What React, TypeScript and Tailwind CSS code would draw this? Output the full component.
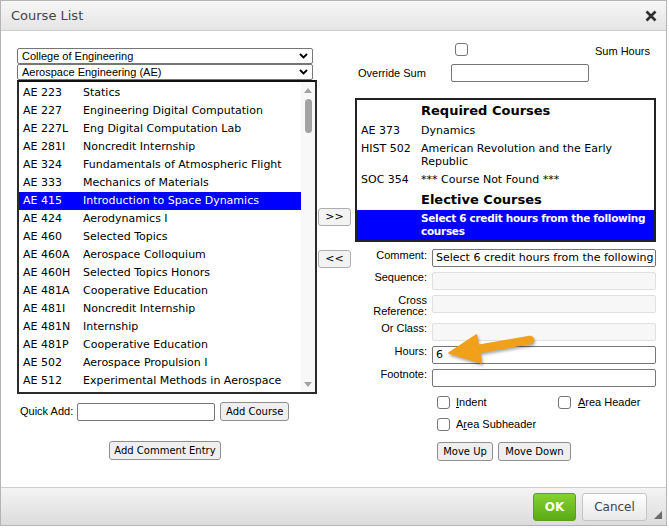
// Course List dialog (program builder)

const verdana = "font-['DejaVu_Sans',Verdana,sans-serif]";
const arial = "font-['Liberation_Sans',Arial,sans-serif]";

const leftCourses: [string, string][] = [
  ["AE 223", "Statics"],
  ["AE 227", "Engineering Digital Computation"],
  ["AE 227L", "Eng Digital Computation Lab"],
  ["AE 281I", "Noncredit Internship"],
  ["AE 324", "Fundamentals of Atmospheric Flight"],
  ["AE 333", "Mechanics of Materials"],
  ["AE 415", "Introduction to Space Dynamics"],
  ["AE 424", "Aerodynamics I"],
  ["AE 460", "Selected Topics"],
  ["AE 460A", "Aerospace Colloquium"],
  ["AE 460H", "Selected Topics Honors"],
  ["AE 481A", "Cooperative Education"],
  ["AE 481I", "Noncredit Internship"],
  ["AE 481N", "Internship"],
  ["AE 481P", "Cooperative Education"],
  ["AE 502", "Aerospace Propulsion I"],
  ["AE 512", "Experimental Methods in Aerospace"],
];

const Chevron = () => (
  <svg width="9" height="6" viewBox="0 0 9 6" className="mr-[2px]">
    <path d="M1 1 L4.5 4.5 L8 1" fill="none" stroke="#000" strokeWidth="1.8" />
  </svg>
);

const FakeSelect = ({ label }: { label: string }) => (
  <div
    className={`flex items-center justify-between h-[16px] w-[296px] border border-[#767676] rounded-[2px] bg-white pl-[4px] pr-[2px] text-[11px] leading-[14px] text-black ${arial}`}
  >
    <span>{label}</span>
    <Chevron />
  </div>
);

const Check = () => (
  <span className="block w-[13px] h-[13px] border border-[#767676] rounded-[3px] bg-white shrink-0" />
);

const Btn = ({ label, className }: { label: string; className: string }) => (
  <button
    className={`flex items-center justify-center border border-[#8f8f8f] rounded-[3px] bg-[#efefef] text-[10px] text-black ${verdana} ${className}`}
  >
    {label}
  </button>
);

const Field = ({ value, disabled }: { value?: string; disabled?: boolean }) => (
  <div
    className={`h-[18px] w-[224px] overflow-hidden whitespace-nowrap rounded-[2px] border pl-[3px] text-[11px] leading-[16px] text-black ${verdana} ${
      disabled ? "border-[#e0e0e0] bg-[#f7f7f7]" : "border-[#767676] bg-white"
    }`}
  >
    {value}
  </div>
);

const App = () => {
  return (
    <div className="relative w-[669px] h-[528px] bg-white">
      <div className="flex flex-col w-[667px] h-[526px] border border-[#b4b4b4] bg-white">
        {/* Title bar */}
        <div className="flex items-center justify-between h-[30px] shrink-0 border-b border-[#cdcdcd] bg-gradient-to-b from-[#f7f7f7] to-[#e4e4e4] pl-[10px] pr-[9px]">
          <span className={`text-[13px] text-[#444] ${verdana}`}>Course List</span>
          <svg width="12" height="12" viewBox="0 0 12 12">
            <path d="M1.5 1.5 L10.5 10.5 M10.5 1.5 L1.5 10.5" stroke="#2e2e2e" strokeWidth="2.6" />
          </svg>
        </div>

        {/* Body */}
        <div className="flex flex-1 items-start pl-[16px]">
          {/* Left column */}
          <div className="w-[300px] pt-[17px]">
            <FakeSelect label="College of Engineering" />
            <FakeSelect label="Aerospace Engineering (AE)" />
            <div className="flex w-[300px] h-[314px] border-2 border-[#2b2b2b] border-t-[#111] bg-white">
              <div className={`w-[282px] pt-[2px] text-[11px] text-black ${verdana}`}>
                {leftCourses.map(([code, name]) => (
                  <div
                    key={code}
                    className={`flex items-center h-[18px] whitespace-nowrap ${
                      code === "AE 415" ? "bg-[#0000ff] text-white" : ""
                    }`}
                  >
                    <span className="w-[64px] pl-[4px]">{code}</span>
                    <span>{name}</span>
                  </div>
                ))}
              </div>
              <div className="flex flex-col items-center w-[14px] bg-[#f8f8f8]">
                <svg width="8" height="5" viewBox="0 0 8 5" className="mt-[6px]">
                  <path d="M0 5 L4 0 L8 5 Z" fill="#a3a3a3" />
                </svg>
                <span className="block w-[7px] h-[34px] mt-[6px] rounded-full bg-[#a3a3a3]" />
                <span className="flex-1" />
                <svg width="8" height="5" viewBox="0 0 8 5" className="mb-[5px]">
                  <path d="M0 0 L8 0 L4 5 Z" fill="#a3a3a3" />
                </svg>
              </div>
            </div>

            {/* Quick add */}
            <div className="flex items-center mt-[8px]">
              <span className={`ml-[3px] text-[11px] text-black ${arial}`}>Quick Add:</span>
              <span className="block ml-[4px] w-[138px] h-[18px] border border-[#767676] rounded-[2px] bg-white" />
              <Btn label="Add Course" className="ml-[5px] w-[69px] h-[19px]" />
            </div>
            <Btn label="Add Comment Entry" className="mt-[20px] ml-[92px] w-[112px] h-[19px]" />
          </div>

          {/* Move buttons */}
          <div className="flex flex-col w-[38px] pt-[177px] pl-px">
            <button className={`w-[33px] h-[18px] border border-[#adadad] rounded-[3px] bg-[#f3f3f3] text-[11px] text-black ${verdana}`}>
              &gt;&gt;
            </button>
            <button className={`mt-[24px] w-[33px] h-[18px] border border-[#adadad] rounded-[3px] bg-[#f3f3f3] text-[11px] text-black ${verdana}`}>
              &lt;&lt;
            </button>
          </div>

          {/* Right column */}
          <div className={`w-[301px] pt-[12px] text-[11px] leading-[13px] text-black ${arial}`}>
            <div className="flex items-center h-[13px]">
              <span className="ml-[100px]">
                <Check />
              </span>
              <span className="ml-auto mr-[6px] translate-y-[2px]">Sum Hours</span>
            </div>
            <div className="flex items-center mt-[8px]">
              <span className="w-[96px] pl-[3px]">Override Sum</span>
              <span className="block w-[138px] h-[18px] border border-[#767676] rounded-[2px] bg-white" />
            </div>

            {/* Selected requirements */}
            <div className={`mt-[16px] w-[301px] border-2 border-[#222] bg-white text-[11px] ${verdana}`}>
              <div className="flex items-center h-[21px]">
                <span className="w-[64px]" />
                <span className="text-[13px] font-bold">Required Courses</span>
              </div>
              <div className="flex py-[2.5px] leading-[13px]">
                <span className="w-[64px] shrink-0 pl-[4px]">AE 373</span>
                <span className="flex-1">Dynamics</span>
              </div>
              <div className="flex py-[2.5px] leading-[13px]">
                <span className="w-[64px] shrink-0 pl-[4px]">HIST 502</span>
                <span className="flex-1">American Revolution and the Early Republic</span>
              </div>
              <div className="flex py-[2.5px] leading-[13px]">
                <span className="w-[64px] shrink-0 pl-[4px]">SOC 354</span>
                <span className="flex-1">*** Course Not Found ***</span>
              </div>
              <div className="flex items-center h-[22px]">
                <span className="w-[64px]" />
                <span className="text-[13px] font-bold">Elective Courses</span>
              </div>
              <div className="flex py-[2px] leading-[13px] bg-[#0000ff] text-white font-bold text-[10.5px] tracking-[-0.3px]">
                <span className="w-[64px] shrink-0" />
                <span className="flex-1">Select 6 credit hours from the following courses</span>
              </div>
            </div>

            {/* Entry details */}
            <div className="grid grid-cols-[72px_224px] gap-x-[5px] gap-y-[5px] mt-[7px] leading-[11px]">
              <span className="text-right pt-[1px]">Comment:</span>
              <Field value="Select 6 credit hours from the following courses" />
              <span className="text-right">Sequence:</span>
              <Field disabled />
              <span className="text-right pl-[12px]">Cross Reference:</span>
              <div className="h-[23px]">
                <Field disabled />
              </div>
              <span className="text-right">Or Class:</span>
              <Field disabled />
              <span className="text-right">Hours:</span>
              <Field value="6" />
              <span className="text-right">Footnote:</span>
              <Field />
            </div>

            <div className="flex items-center h-[13px] mt-[9px] ml-[82px]">
              <div className="flex items-center w-[121px]">
                <Check />
                <span className="ml-[6px]">
                  <span className="underline">I</span>ndent
                </span>
              </div>
              <Check />
              <span className="ml-[7px]">
                <span className="underline">A</span>rea Header
              </span>
            </div>
            <div className="flex items-center h-[13px] mt-[9px] ml-[82px]">
              <Check />
              <span className="ml-[6px]">
                A<span className="underline">r</span>ea Subheader
              </span>
            </div>
            <div className="flex mt-[11px] ml-[82px]">
              <Btn label="Move Up" className="w-[56px] h-[19px]" />
              <Btn label="Move Down" className="ml-[5px] w-[73px] h-[19px]" />
            </div>
          </div>
        </div>

        {/* Footer */}
        <div className="relative flex items-center justify-end gap-[6px] h-[38px] shrink-0 border-t border-[#cdcdcd] bg-gradient-to-b from-[#f4f4f4] to-[#dcdcdc] pr-[19px]">
          <button className={`w-[43px] h-[28px] rounded-[3px] border border-[#5e9e1b] bg-gradient-to-b from-[#86d231] to-[#5aaa14] text-[12px] font-bold text-white ${verdana}`}>
            OK
          </button>
          <button className={`w-[65px] h-[28px] rounded-[3px] border border-[#c4c4c4] bg-gradient-to-b from-white to-[#e8e8e8] text-[12px] text-[#444] ${verdana}`}>
            Cancel
          </button>
          <svg width="8" height="8" viewBox="0 0 8 8" className="absolute right-[4px] bottom-[6px]">
            <path d="M8 0 L8 8 L0 8 Z" fill="#6b6b6b" />
          </svg>
        </div>
      </div>

      {/* Callout arrow */}
      <svg
        width="100"
        height="45"
        viewBox="440 325 100 45"
        className="absolute left-[440px] top-[325px] drop-shadow-[1px_2px_1.5px_rgba(0,0,0,0.35)]"
      >
        <path d="M478 349 L530 340" stroke="#f0a01a" strokeWidth="8.5" strokeLinecap="round" />
        <path d="M449 353 L476.5 335 L481.5 363 Z" fill="#f0a01a" stroke="#f0a01a" strokeWidth="1.5" strokeLinejoin="round" />
      </svg>
    </div>
  );
};

export default App;
